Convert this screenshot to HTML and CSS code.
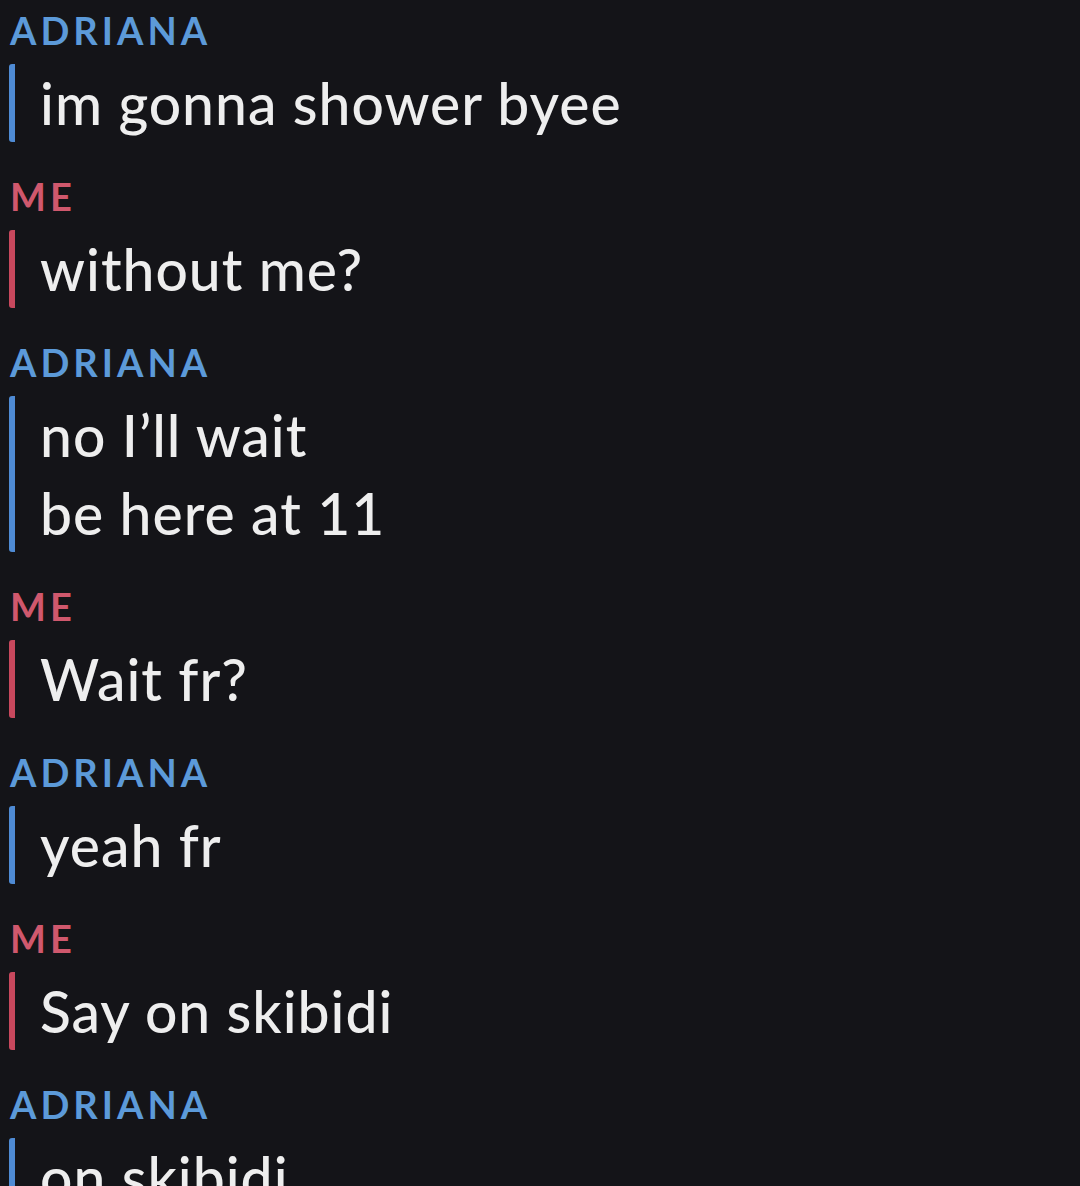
FILE: index.html
```html
<!DOCTYPE html>
<html lang="en">
<head>
    <meta charset="UTF-8">
    <meta name="viewport" content="width=device-width, initial-scale=1.0">
    <title>Chat</title>
    <link rel="stylesheet" href="styles.css">
</head>
<body>
    <div class="chat">
        <div class="block them">
            <div class="name">ADRIANA</div>
            <div class="msgs">
                <div class="line">im gonna shower byee</div>
            </div>
        </div>
        <div class="block me">
            <div class="name">ME</div>
            <div class="msgs">
                <div class="line">without me?</div>
            </div>
        </div>
        <div class="block them">
            <div class="name">ADRIANA</div>
            <div class="msgs">
                <div class="line">no I’ll wait</div>
                <div class="line">be here at 11</div>
            </div>
        </div>
        <div class="block me">
            <div class="name">ME</div>
            <div class="msgs">
                <div class="line">Wait fr?</div>
            </div>
        </div>
        <div class="block them">
            <div class="name">ADRIANA</div>
            <div class="msgs">
                <div class="line">yeah fr</div>
            </div>
        </div>
        <div class="block me">
            <div class="name">ME</div>
            <div class="msgs">
                <div class="line">Say on skibidi</div>
            </div>
        </div>
        <div class="block them">
            <div class="name">ADRIANA</div>
            <div class="msgs">
                <div class="line">on skibidi</div>
            </div>
        </div>
    </div>
</body>
</html>
```

FILE: styles.css
```css
body {
    margin: 0;
    background-color: #141418;
    font-family: Lato, "Open Sans", sans-serif;
    overflow: hidden;
}
.chat {
    display: flex;
    flex-direction: column;
    padding: 8px 0 0 9px;
}
.block {
    margin-bottom: 32px;
}
.name {
    font-size: 38px;
    font-weight: 700;
    letter-spacing: 4px;
    line-height: 44px;
    margin-bottom: 12px;
    padding-left: 1px;
}
.msgs {
    border-left: 6px solid;
    border-radius: 3px;
    padding-left: 25px;
}
.line {
    font-size: 57px;
    font-weight: 500;
    letter-spacing: 1px;
    line-height: 78px;
    color: #eeeeee;
}
.them .name {
    color: #5c9ad9;
}
.them .msgs {
    border-color: #4f8bd4;
}
.me .name {
    color: #d0586d;
}
.me .msgs {
    border-color: #c8485d;
}
```
